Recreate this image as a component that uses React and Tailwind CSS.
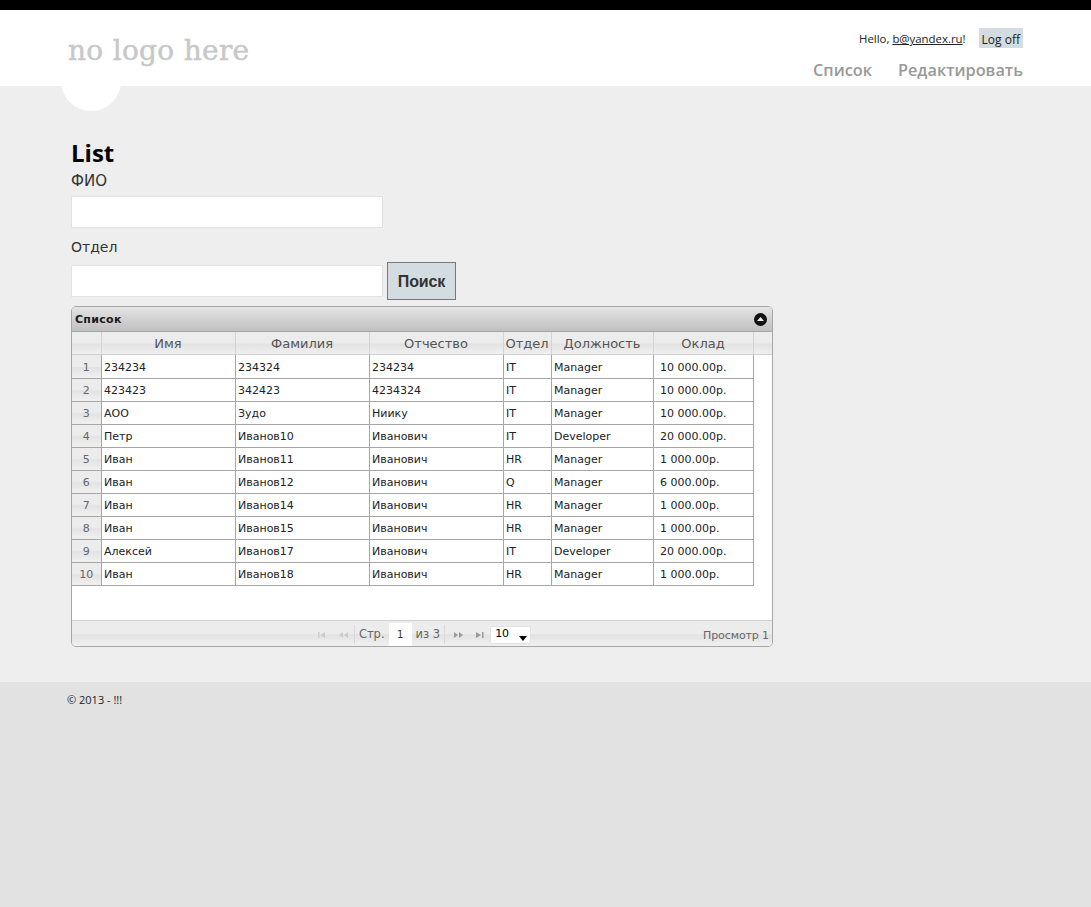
import React from "react";

const rows = [
  ["234234","234324","234234","IT","Manager","10 000.00р."],
  ["423423","342423","4234324","IT","Manager","10 000.00р."],
  ["АОО","Зудо","Ниику","IT","Manager","10 000.00р."],
  ["Петр","Иванов10","Иванович","IT","Developer","20 000.00р."],
  ["Иван","Иванов11","Иванович","HR","Manager","1 000.00р."],
  ["Иван","Иванов12","Иванович","Q","Manager","6 000.00р."],
  ["Иван","Иванов14","Иванович","HR","Manager","1 000.00р."],
  ["Иван","Иванов15","Иванович","HR","Manager","1 000.00р."],
  ["Алексей","Иванов17","Иванович","IT","Developer","20 000.00р."],
  ["Иван","Иванов18","Иванович","HR","Manager","1 000.00р."],
];
const widths = ["w-[29px]","w-[134px]","w-[134px]","w-[134px]","w-[48px]","w-[102px]","w-[100px]"];
const heads = ["","Имя","Фамилия","Отчество","Отдел","Должность","Оклад"];
const band = "bg-[linear-gradient(#ececec_0%,#ececec_50%,#e2e2e2_55%,#f0f0f0_100%)]";

function Colgroup() {
  return <colgroup>{widths.map((w,i)=><col key={i} className={w} />)}</colgroup>;
}

function PagerIcon({ kind, color }) {
  const p = {
    first: "M1 1h1.5v6H1zM8 1v6L3.5 4z",
    prev: "M5 1v6L1 4zM10 1v6L6 4z",
    next: "M1 1v6l4-3zM6 1v6l4-3z",
    last: "M1 1v6l5-3zM7 1h1.5v6H7z",
  }[kind];
  return <svg width="11" height="8" viewBox="0 0 11 8" fill={color}><path d={p} /></svg>;
}

export default function App() {
  return (
    <div className="min-h-[907px] flex flex-col bg-[#e2e2e2] font-['Open_Sans','Noto_Sans',sans-serif] text-[#333]">
      <div className="h-[10px] bg-black" />
      <header className="h-[76px] bg-white flex justify-between pl-[68px] pr-[68px] relative">
        <div className="relative z-10 font-['DejaVu_Serif',serif] text-[28px] leading-[34px] pt-[24px] text-[#c8c8c8] [-webkit-text-stroke:0.5px_#c8c8c8] tracking-[0.3px]">no logo here</div>
        <div className="flex flex-col items-end">
          <div className="flex items-center mt-[18px] h-[20px] text-[12px] text-[#222]">
            <span className="text-[11.4px] pt-[2px]">Hello, <a className="underline text-[#222]">b@yandex.ru</a>!</span>
            <span className="ml-[13px] px-[3px] h-[20px] leading-[23px] bg-[#d3dce0]">Log off</span>
          </div>
          <nav className="flex gap-[26px] mt-[11px] text-[16.3px] leading-[22px] font-semibold text-[#999]">
            <a>Список</a>
            <a>Редактировать</a>
          </nav>
        </div>
        <div className="absolute left-[61px] top-[41px] w-[60px] h-[60px] rounded-full bg-white" />
      </header>

      <main className="h-[596px] bg-[#efeeef] pl-[71px] pt-[52px] font-['DejaVu_Sans',sans-serif]">
        <h1 className="font-['Open_Sans',sans-serif] font-bold text-[24px] leading-[30px] text-black">List</h1>
        <div className="mt-[3px] text-[15px] leading-[20px] text-[#333]">ФИО</div>
        <input className="block mt-[5px] w-[312px] h-[32px] bg-white border border-[#e2e2e2]" />
        <div className="mt-[8px] text-[14px] leading-[22px] text-[#333]">Отдел</div>
        <div className="flex items-center mt-[4px]">
          <input className="w-[312px] h-[32px] bg-white border border-[#e2e2e2]" />
          <button className="ml-[4px] w-[69px] h-[38px] pt-[1px] bg-[#d3dce0] border border-[#787878] font-['Liberation_Sans',sans-serif] font-bold text-[16px] tracking-[-0.1px] text-[#333]">Поиск</button>
        </div>

        <section className="mt-[6px] w-[702px] h-[341px] border border-[#a6a6a6] rounded-[5px] bg-white overflow-hidden flex flex-col text-[11px]">
          <div className="h-[25px] shrink-0 flex items-center justify-between pl-[3px] pr-[5px] border-b border-[#a6a6a6] bg-[linear-gradient(#e4e4e4,#c0c0c0)]">
            <span className="font-bold text-[#1a1a1a] tracking-[0.3px] pt-[3px]">Список</span>
            <span className="w-[13px] h-[13px] rounded-full bg-[#111] flex items-center justify-center">
              <svg width="7" height="4" viewBox="0 0 7 4"><path d="M3.5 0L7 4H0z" fill="#eee" /></svg>
            </span>
          </div>
          <div className={`h-[23px] shrink-0 ${band} border-b border-[#d0d0d0]`}>
            <table className="table-fixed border-collapse w-[681px]">
              <Colgroup />
              <thead>
                <tr>
                  {heads.map((h,i)=>(
                    <th key={i} className="h-[22px] p-0 pt-[1px] font-normal text-[13px] text-[#555] border-r border-[#d3d3d3] text-center">{h}</th>
                  ))}
                </tr>
              </thead>
            </table>
          </div>
          <div className="grow">
            <table className="table-fixed border-collapse w-[681px] text-[#222]">
              <Colgroup />
              <tbody>
                {rows.map((r,i)=>(
                  <tr key={i} className="h-[23px] border-b border-[#a6a6a6]">
                    <td className={`p-0 pt-[3px] text-center text-[#666] border-r border-[#a6a6a6] ${band}`}>{i+1}</td>
                    {r.map((c,j)=>(
                      <td key={j} className={`p-0 pt-[3px] ${j===5 ? "pl-[6.5px]" : "pl-[2.5px]"} border-r border-[#a6a6a6] whitespace-nowrap`}>{c}</td>
                    ))}
                  </tr>
                ))}
              </tbody>
            </table>
          </div>
          <div className={`h-[26px] shrink-0 relative flex items-center justify-center pt-[2px] border-t border-[#d0d0d0] ${band} text-[#666]`}>
            <div className="flex items-center translate-x-[2px]">
              <PagerIcon kind="first" color="#ccc" />
              <span className="w-[10px]" />
              <PagerIcon kind="prev" color="#ccc" />
              <span className="w-px h-[19px] bg-[#d8d8d8] ml-[5px] mr-[4px]" />
              <span className="text-[11.5px]">Стр.</span>
              <span className="w-[23px] h-[24px] bg-white ml-[4px] mr-[4px] flex items-center justify-center text-[#333] text-[10px]">1</span>
              <span className="text-[11.5px]">из 3</span>
              <span className="w-px h-[19px] bg-[#d8d8d8] mx-[4px]" />
              <span className="w-[4px]" />
              <PagerIcon kind="next" color="#999" />
              <span className="w-[11px]" />
              <PagerIcon kind="last" color="#999" />
              <span className="w-[4px]" />
              <span className="relative w-[41px] h-[18px] bg-white border border-[#e2e2e2] rounded-[2px] text-black pl-[4px] leading-[13px]">
                10
                <svg className="absolute right-[3px] top-[9px]" width="8" height="5" viewBox="0 0 8 5"><path d="M0 0h8L4 5z" fill="#000" /></svg>
              </span>
            </div>
            <span className="absolute right-[3px] top-[7px] text-[#666] tracking-[-0.1px]">Просмотр 1</span>
          </div>
        </section>
      </main>

      <footer className="grow pl-[67px] pt-[10px] text-[11px] leading-[16px] text-[#222]">© 2013 - !!!</footer>
    </div>
  );
}
